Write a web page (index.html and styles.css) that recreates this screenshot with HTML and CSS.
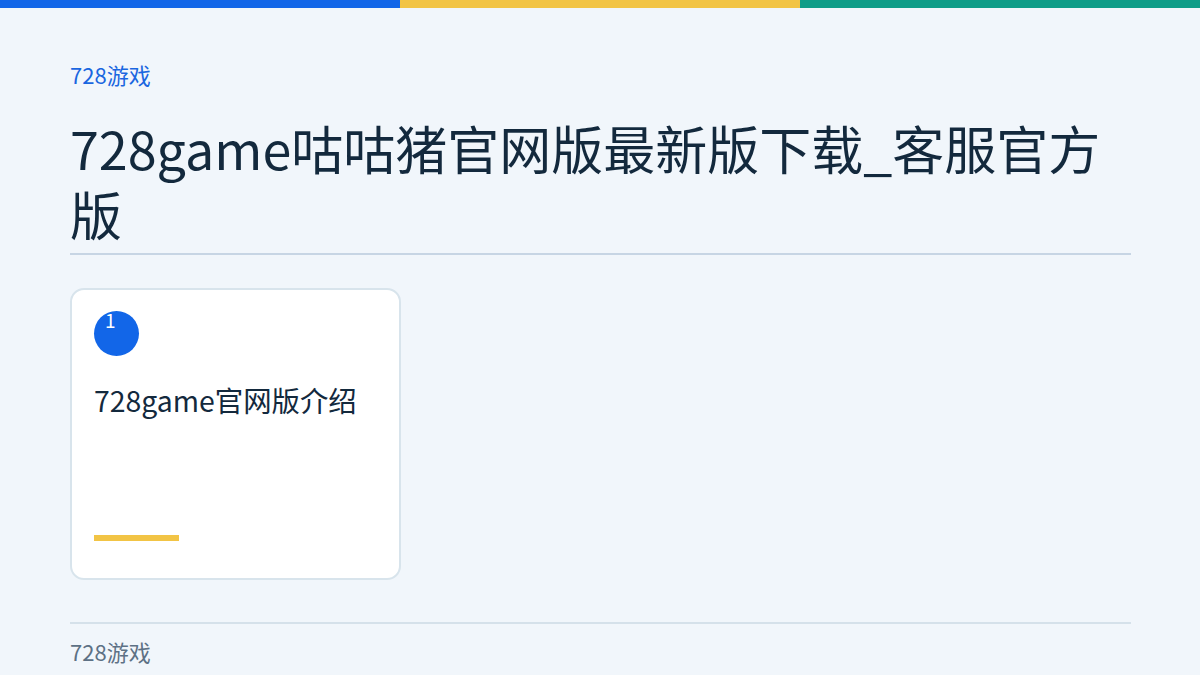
FILE: index.html
```html
<!DOCTYPE html>
<html lang="zh-CN">
<head>
    <meta charset="utf-8">
    <title>728game咕咕猪官网版最新版下载_客服官方版</title>
    <link rel="stylesheet" href="styles.css">
</head>
<body>

<div class="topbar">
    <div class="blue"></div>
    <div class="yellow"></div>
    <div class="teal"></div>
</div>

<div class="page">
    <div class="crumb">728游戏</div>
    <h1 class="title">728game咕咕猪官网版最新版下载_客服官方版</h1>

    <div class="cards">
        <div class="card">
            <div class="num">1</div>
            <div class="card-title">728game官网版介绍</div>
            <div class="card-bar"></div>
        </div>
    </div>

    <div class="footer">728游戏</div>
</div>

</body>
</html>
```

FILE: styles.css
```css
body {
  margin: 0;
  background-color: #f1f6fb;
  font-family: "Noto Sans CJK SC", "Noto Sans", sans-serif;
  color: #13293d;
}
.topbar {
  display: flex;
  height: 8px;
}
.topbar div {
  flex: 1;
}
.blue {
  background-color: #1266e8;
}
.yellow {
  background-color: #f2c445;
}
.teal {
  background-color: #0f9d88;
}
.page {
  padding: 50px 69px 0 70px;
}
.crumb {
  font-size: 22px;
  line-height: 32px;
  color: #1a66e0;
}
.title {
  margin: 25px 0 0 0;
  padding-bottom: 6px;
  font-size: 52px;
  line-height: 66px;
  font-weight: 400;
  color: #13293d;
  border-bottom: 2px solid #c7d5e4;
}
.cards {
  display: grid;
  grid-template-columns: repeat(3, 331px);
  margin-top: 33px;
}
.card {
  display: flex;
  flex-direction: column;
  box-sizing: border-box;
  height: 292px;
  padding: 21px 22px;
  background-color: white;
  border: 2px solid #d8e4ec;
  border-radius: 14px;
}
.num {
  width: 45px;
  height: 45px;
  box-sizing: border-box;
  padding-left: 11px;
  border-radius: 50%;
  background-color: #1266e8;
  color: white;
  font-size: 19px;
  line-height: 18px;
}
.card-title {
  margin-top: 26px;
  font-size: 28.4px;
  line-height: 36px;
}
.card-bar {
  margin-top: auto;
  margin-bottom: 16px;
  width: 85px;
  height: 6px;
  background-color: #f2c445;
}
.footer {
  margin-top: 42px;
  padding-top: 11px;
  border-top: 2px solid #d5e1ea;
  font-size: 22px;
  line-height: 32px;
  color: #5d7185;
}
```
